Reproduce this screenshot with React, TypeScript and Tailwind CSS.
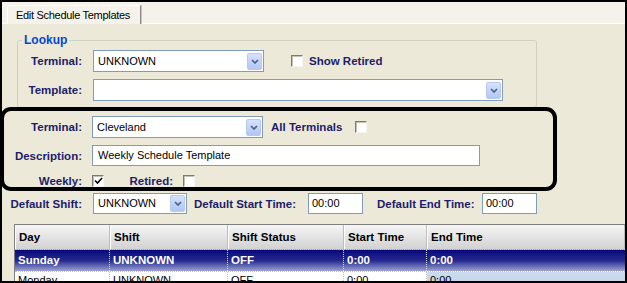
import React from "react";

const label = "font-bold text-[11.5px] leading-[14px] text-[#1d1d6b] whitespace-nowrap";

function DropButton() {
  return (
    <span className="ml-auto mr-[1px] flex h-[17px] w-[15px] shrink-0 items-center justify-center rounded-[2px] border border-[#b7c8f2] bg-linear-to-b from-[#d6e2fd] to-[#b2c5f5]">
      <svg width="8" height="5" viewBox="0 0 8 5">
        <path d="M1 1 L4 4 L7 1" fill="none" stroke="#4d6185" strokeWidth="1.7" />
      </svg>
    </span>
  );
}

function Combo({ value, className }: { value: string; className: string }) {
  return (
    <div className={`flex shrink-0 items-center border border-[#7f9db9] bg-white pl-[4px] ${className}`}>
      <span className="text-[11px] text-black">{value}</span>
      <DropButton />
    </div>
  );
}

function Input({ value, className }: { value: string; className: string }) {
  return (
    <div className={`flex shrink-0 items-center border border-[#7f9db9] bg-white pl-[3px] text-[11px] text-black ${className}`}>
      {value}
    </div>
  );
}

function Checkbox({ checked, className = "" }: { checked?: boolean; className?: string }) {
  return (
    <span
      className={`flex h-[12px] w-[12px] shrink-0 items-center justify-center border border-t-[#7b7b7b] border-l-[#7b7b7b] border-r-[#f4f4f4] border-b-[#f4f4f4] bg-white shadow-[inset_1px_1px_0_#c4c1b4] ${className}`}
    >
      {checked && (
        <svg width="9" height="8" viewBox="0 0 9 8">
          <path d="M1 3.5 L3.5 6 L8 1" fill="none" stroke="#000" strokeWidth="1.6" />
        </svg>
      )}
    </span>
  );
}

const cols = [
  { name: "Day", w: "w-[95px]" },
  { name: "Shift", w: "w-[118px]" },
  { name: "Shift Status", w: "w-[116px]" },
  { name: "Start Time", w: "w-[83px]" },
  { name: "End Time", w: "flex-1" },
];

const sunday = ["Sunday", "UNKNOWN", "OFF", "0:00", "0:00"];
const monday = ["Monday", "UNKNOWN", "OFF", "0:00", "0:00"];

export default function App() {
  return (
    <div className="flex h-[283px] w-[627px] flex-col overflow-hidden border-2 border-black bg-[#ece9d8] font-['Liberation_Sans',Arial,sans-serif] text-[11px] leading-[13px]">
      {/* tab strip */}
      <div className="flex h-[22px] shrink-0 items-end border-b border-white bg-[#f4f2ea] pl-[5px]">
        <div className="-mb-px flex h-[19px] w-[134px] items-center border-t border-l border-r border-white border-r-[#8a8a86] bg-[#f4f2ea] pl-[8px] tracking-[-0.3px] text-black shadow-[1px_0_0_#c9c6b8]">
          Edit Schedule Templates
        </div>
      </div>

      {/* lookup group */}
      <fieldset className="ml-[15px] mt-[9px] w-[520px] shrink-0 rounded-[3px] border border-[#d0d0bf] px-0 pb-[6px]">
        <legend className="ml-[4px] px-[2px] text-[12px] font-bold leading-[14px] text-[#0046d5]">Lookup</legend>
        <div className="mt-[3px] flex h-[22px] items-center">
          <span className={`${label} w-[64px] text-right`}>Terminal:</span>
          <Combo value="UNKNOWN" className="ml-[11px] h-[22px] w-[171px]" />
          <Checkbox className="ml-[27px]" />
          <span className={`${label} ml-[6px]`}>Show Retired</span>
        </div>
        <div className="mt-[7px] flex h-[22px] items-center">
          <span className={`${label} w-[64px] text-right`}>Template:</span>
          <Combo value="" className="ml-[11px] h-[22px] w-[410px]" />
        </div>
      </fieldset>

      {/* highlighted block */}
      <div className="-ml-[2px] -mt-px flex h-[84px] w-[557px] shrink-0 flex-col rounded-[11px] border-4 border-black pt-[5px]">
        <div className="flex h-[22px] items-center">
          <span className={`${label} w-[78px] text-right`}>Terminal:</span>
          <Combo value="Cleveland" className="ml-[10px] h-[22px] w-[171px]" />
          <span className={`${label} ml-[8px] w-[84px]`}>All Terminals</span>
          <Checkbox />
        </div>
        <div className="mt-[7px] flex h-[21px] items-center">
          <span className={`${label} w-[78px] text-right`}>Description:</span>
          <Input value="Weekly Schedule Template" className="ml-[10px] h-[21px] w-[388px] pl-[5px]" />
        </div>
        <div className="mt-[9px] flex h-[12px] items-center">
          <span className={`${label} w-[78px] text-right`}>Weekly:</span>
          <Checkbox checked className="ml-[10px]" />
          <span className={`${label} w-[79px] pr-[10px] text-right`}>Retired:</span>
          <Checkbox />
        </div>
      </div>

      {/* defaults */}
      <div className="mt-[2px] flex h-[21px] shrink-0 items-center">
        <span className={`${label} w-[80px] text-right`}>Default Shift:</span>
        <Combo value="UNKNOWN" className="ml-[11px] h-[21px] w-[94px]" />
        <span className={`${label} ml-[7px] w-[114px]`}>Default Start Time:</span>
        <Input value="00:00" className="h-[21px] w-[55px]" />
        <span className={`${label} ml-[14px] w-[105px]`}>Default End Time:</span>
        <Input value="00:00" className="h-[21px] w-[55px]" />
      </div>

      {/* grid */}
      <div className="ml-[12px] mt-[10px] flex min-h-0 flex-1 flex-col border-t border-l border-[#7f7f7f] bg-white">
        <div className="flex h-[24px] shrink-0 bg-linear-to-b from-[#f6f6f6] to-[#d2d2d2]">
          {cols.map((c) => (
            <div
              key={c.name}
              className={`${c.w} flex items-center border-r border-[#bdbdbd] pl-[4px] text-[11.5px] font-bold text-black shadow-[inset_1px_0_0_#ffffff]`}
            >
              {c.name}
            </div>
          ))}
        </div>
        <div className="flex h-[22px] shrink-0 border-t border-dotted border-[#c8c8d8] bg-linear-to-b from-[#08087c] via-[#26268e] to-[#a2a2d2]">
          {sunday.map((v, i) => (
            <div
              key={i}
              className={`${cols[i].w} flex items-center pl-[3px] text-[11.5px] font-bold text-white ${i < 4 ? "border-r border-dotted border-[#d8d8e8]" : ""}`}
            >
              {v}
            </div>
          ))}
        </div>
        <div className="flex h-[22px] shrink-0 border-t border-dotted border-[#c0c0c0]">
          {monday.map((v, i) => (
            <div
              key={i}
              className={`${cols[i].w} pl-[3px] pt-[2px] text-[11px] text-black ${i < 4 ? "border-r border-dotted border-[#c0c0c0] bg-white" : "bg-linear-to-b from-[#cddbee] to-[#bccfe8]"}`}
            >
              {v}
            </div>
          ))}
        </div>
      </div>
    </div>
  );
}
